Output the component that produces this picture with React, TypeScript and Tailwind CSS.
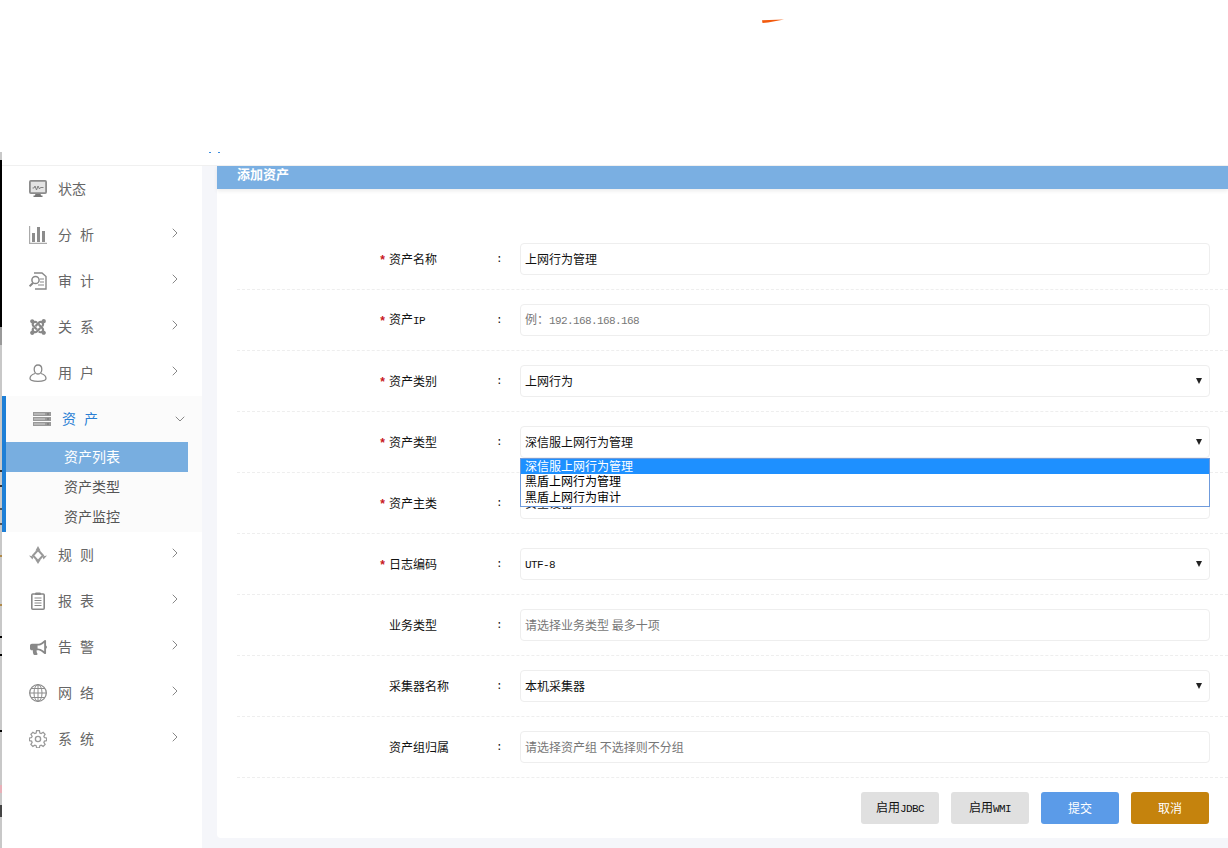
import { ChevronRight, ChevronDown } from "lucide-react";
import { FaBullhorn, FaJoomla } from "react-icons/fa";
import type { ReactNode } from "react";

const CJK = "font-['Noto_Sans_CJK_SC',sans-serif]";

function M({ children }: { children: ReactNode }) {
  return <span className="font-['Liberation_Mono',monospace] text-[11px] tracking-[-0.6px]">{children}</span>;
}

const MonitorIcon = () => (
  <svg width="18" height="18" viewBox="0 0 18 18" fill="none">
    <rect x="0.9" y="0.9" width="16.2" height="12.2" rx="1" fill="#e4e4e4" stroke="#8c8c8c" strokeWidth="1.8" />
    <path d="M3.500 8h1.500l1-2 1.500 4L9 6l1.500 3 1-1.500h3" stroke="#777" strokeWidth="0.9" />
    <path d="M6.500 14h5l.7 1.500H5.800zM4.500 15.500h9V17h-9z" fill="#777" />
  </svg>
);
const BarsIcon = () => (
  <svg width="18" height="18" viewBox="0 0 18 18" fill="#8c8c8c">
    <path d="M0 0h1.200v16.800H18V18H0z" fill="#aaa" />
    <rect x="3" y="7" width="3" height="9" />
    <rect x="8" y="1" width="3" height="15" />
    <rect x="13" y="5" width="3" height="11" />
  </svg>
);
const AuditIcon = () => (
  <svg width="18" height="18" viewBox="0 0 18 18" fill="none" stroke="#888">
    <path d="M5 1h8l4 3.500V17H6" strokeWidth="1.400" />
    <path d="M11 7h4M11 10h4M9 13h6" strokeWidth="1.200" />
    <circle cx="6.500" cy="8" r="3.600" strokeWidth="1.500" />
    <path d="M4 11 .6 14.400" strokeWidth="2" />
  </svg>
);
const UserIcon = () => (
  <svg width="18" height="18" viewBox="0 0 18 18" fill="none" stroke="#888" strokeWidth="1.300">
    <path d="M9 1c2.400 0 3.800 1.800 3.800 4.200S11.400 10 9 10 5.200 7.600 5.200 5.200 6.600 1 9 1Z" />
    <path d="M6 9.500C3 10.500 1 12 1 14.500c0 1.600 3 2.800 8 2.800s8-1.200 8-2.800c0-2.500-2-4-5-5" />
  </svg>
);
const ServerIcon = () => (
  <svg width="18" height="14" viewBox="0 0 18 14" fill="#999">
    <rect width="18" height="4" />
    <rect y="5" width="18" height="4" />
    <rect y="10" width="18" height="4" />
    <path d="M1 2h11M1 7h11M1 12h11" stroke="#eee" strokeWidth="0.700" />
    <path d="M14.500 1.500h1v1h-1zM14.500 6.500h1v1h-1zM14.500 11.500h1v1h-1z" fill="#444" />
  </svg>
);
const RuleIcon = () => (
  <svg width="18" height="18" viewBox="0 0 18 18" fill="none" stroke="#999">
    <path d="M9 4 14 9.500 9 15 4 9.500z" strokeWidth="2" />
    <path d="M9 0 6.500 4.500h5zM0 9.500l3.500 4 1-3zM18 9.500l-3.500 4-1-3zM6.500 14l2.500 4 2.500-4z" fill="#999" stroke="none" />
  </svg>
);
const ReportIcon = () => (
  <svg width="14" height="18" viewBox="0 0 14 18" fill="none" stroke="#888">
    <rect x="0.800" y="2" width="12.400" height="15.200" rx="1" strokeWidth="1.600" />
    <path d="M4.500 2.500V1h5v1.500z" fill="#888" />
    <path d="M3.500 6h7M3.500 8.500h7M3.500 11h7M3.500 13.500h7" strokeWidth="1" />
  </svg>
);
const GlobeIcon = () => (
  <svg width="18" height="18" viewBox="0 0 18 18" fill="none" stroke="#8c8c8c">
    <circle cx="9" cy="9" r="8.300" strokeWidth="1.300" />
    <ellipse cx="9" cy="9" rx="4" ry="8.300" />
    <path d="M9 .7v16.600M.7 9h16.600M2 4.500h14M2 13.500h14" />
  </svg>
);
const GearIcon = () => (
  <svg width="18" height="18" viewBox="0 0 24 24" fill="none" stroke="#999" strokeWidth="1.800">
    <circle cx="12" cy="12" r="3.500" />
    <path d="M10 1.500h4l.7 3.300 1.900.8 2.900-1.800 2.800 2.800-1.800 2.900.8 1.900 3.200.7v3.800l-3.200.7-.8 1.900 1.800 2.900-2.800 2.800-2.900-1.800-1.900.8-.7 3.200h-4l-.7-3.200-1.900-.8-2.900 1.800-2.800-2.800 1.800-2.900-.8-1.900-3.200-.7v-3.800l3.200-.7.8-1.900-1.800-2.900 2.800-2.800 2.900 1.800 1.900-.8z" transform="translate(12 12) scale(.92) translate(-12 -13.500)" />
  </svg>
);

const menuTop = [
  { label: "状态", icon: <MonitorIcon />, arrow: false },
  { label: "分析", icon: <BarsIcon />, arrow: true },
  { label: "审计", icon: <AuditIcon />, arrow: true },
  { label: "关系", icon: <FaJoomla size={18} color="#888" />, arrow: true },
  { label: "用户", icon: <UserIcon />, arrow: true },
];

const menuBottom = [
  { label: "规则", icon: <RuleIcon />, arrow: true },
  { label: "报表", icon: <ReportIcon />, arrow: true },
  { label: "告警", icon: <FaBullhorn size={17} color="#888" />, arrow: true },
  { label: "网络", icon: <GlobeIcon />, arrow: true },
  { label: "系统", icon: <GearIcon />, arrow: true },
];

function MenuItem({ label, icon, arrow }: { label: string; icon: ReactNode; arrow: boolean }) {
  return (
    <div className="flex items-center h-[46px] pl-[27px] text-[14px] text-[#666]">
      <span className="w-[18px] h-[18px] flex items-center justify-center">{icon}</span>
      <span className={`ml-[11px] w-[109px] -mt-[2px] ${arrow ? "tracking-[8px]" : ""}`}>{label}</span>
      {arrow && <ChevronRight size={16} color="#888" className="-mt-[5px]" strokeWidth={1.5} />}
    </div>
  );
}

function Sidebar() {
  return (
    <aside className="w-[200px] shrink-0 bg-white">
      {menuTop.map((m) => (
        <MenuItem key={m.label} {...m} />
      ))}
      <div className="bg-[#fbfbfb] border-l-4 border-[#1e7fd6]">
        <div className="flex items-center h-[46px] pl-[27px] text-[14px] text-[#2a7fd4]">
          <ServerIcon />
          <span className="ml-[11px] w-[110px] -mt-[2px] tracking-[8px]">资产</span>
          <ChevronDown size={16} color="#888" strokeWidth={1.5} />
        </div>
        <div className="w-[182px] text-[14px] text-[#555]">
          <div className="h-[30px] pl-[58px] leading-[28px] bg-[#78aee0] text-white">资产列表</div>
          <div className="h-[30px] pl-[58px] leading-[28px]">资产类型</div>
          <div className="h-[30px] pl-[58px] leading-[28px]">资产监控</div>
        </div>
      </div>
      {menuBottom.map((m) => (
        <MenuItem key={m.label} {...m} />
      ))}
    </aside>
  );
}

type Row = {
  label: ReactNode;
  value: ReactNode;
  required?: boolean;
  select?: boolean;
  placeholder?: boolean;
};

const rows: Row[] = [
  { label: "资产名称", value: "上网行为管理", required: true },
  { label: <>资产<M>IP</M></>, value: <>例：<M>192.168.168.168</M></>, required: true, placeholder: true },
  { label: "资产类别", value: "上网行为", required: true, select: true },
  { label: "资产类型", value: "深信服上网行为管理", required: true, select: true },
  { label: "资产主类", value: "安全设备", required: true, select: true },
  { label: "日志编码", value: <M>UTF-8</M>, required: true, select: true },
  { label: "业务类型", value: "请选择业务类型 最多十项", placeholder: true },
  { label: "采集器名称", value: "本机采集器", select: true },
  { label: "资产组归属", value: "请选择资产组 不选择则不分组", placeholder: true },
];

function FormRow({ row, dropdown }: { row: Row; dropdown?: boolean }) {
  return (
    <div className="flex items-center h-[61px] pb-px pl-[142px] border-b border-dashed border-[#eee] text-[12px] text-[#111]">
      <span className="w-[10px] h-[12px] font-['Liberation_Mono',monospace] text-[12px] font-bold leading-[17px] text-[#c8161d]">
        {row.required ? "*" : ""}
      </span>
      <span className="w-[107px]">{row.label}</span>
      <span className="w-[24px] -mt-px">
        <M>:</M>
      </span>
      <div
        className={`relative flex items-center justify-between w-[690px] h-[32px] pl-[4px] pr-[7px] border border-[#eee] rounded-[4px] ${
          row.placeholder ? "text-[#777]" : "text-[#111]"
        }`}
      >
        <span>{row.value}</span>
        {row.select && (
          <svg width="6" height="6" viewBox="0 0 6 6">
            <path d="M0 0h6L3 6z" fill="#222" />
          </svg>
        )}
        {dropdown && (
          <div className="absolute z-10 -left-px top-[31px] w-[690px] h-[49px] bg-white border border-[#6f9bdc] leading-[14px] text-black">
            <div className="h-[15px] pl-[4px] bg-[#1e90ff] text-white">深信服上网行为管理</div>
            <div className="h-[16px] pl-[4px]">黑盾上网行为管理</div>
            <div className="h-[16px] pl-[4px]">黑盾上网行为审计</div>
          </div>
        )}
      </div>
    </div>
  );
}

function Btn({ className, children }: { className: string; children: ReactNode }) {
  return (
    <button className={`w-[78px] h-[32px] rounded-[3px] text-[12px] ${className}`}>{children}</button>
  );
}

export default function App() {
  return (
    <div className={`relative h-[848px] w-[1228px] overflow-hidden bg-white ${CJK}`}>
      {/* leftover edge of the window behind */}
      <div className="absolute z-10 left-0 top-[152px] w-[2px] h-[696px] bg-[#c8c8c8]">
        <div className="mt-[8px] h-[167px] bg-black" />
        <div className="h-[18px] bg-[#999]" />
        <div className="mt-[125px] h-[2px] bg-[#333]" />
        <div className="mt-[13px] h-[2px] bg-[#333]" />
        <div className="mt-[21px] h-[2px] bg-[#555]" />
        <div className="mt-[13px] h-[2px] bg-[#555]" />
        <div className="mt-[30px] h-[2px] bg-[#b08a4a]" />
        <div className="mt-[47px] h-[2px] bg-[#b08a4a]" />
        <div className="mt-[30px] h-[2px] bg-black" />
        <div className="mt-[16px] h-[2px] bg-black" />
        <div className="mt-[74px] h-[2px] bg-black" />
        <div className="mt-[53px] h-[8px] bg-[#e8b0b8]" />
        <div className="mt-[12px] h-[12px] bg-[#444]" />
      </div>

      <header className="relative h-[166px] bg-white border-b border-[#f0f0f0]">
        <svg className="absolute left-[761px] top-[19px]" width="24" height="5" viewBox="0 0 24 5">
          <path d="M1 1.200 23 0.500 7 3.500 1.500 4z" fill="#f25a0e" />
        </svg>
        <span className="absolute left-[209px] top-[152px] w-[2px] h-px bg-[#3b8de0]" />
        <span className="absolute left-[218px] top-[152px] w-[2px] h-px bg-[#3b8de0]" />
      </header>

      <div className="flex h-[682px] pl-[2px]">
        <Sidebar />
        <main className="flex-1 bg-[#f5f6fa] pl-[15px] pb-[10px]">
          <div className="h-full bg-white rounded-bl-[4px]">
            <div className="h-[23px] pl-[20px] bg-[#7aafe2] text-[13px] font-bold leading-[16px] text-white shadow-[0_2px_4px_rgba(0,0,0,0.08)]">
              添加资产
            </div>
            <div className="pl-[20px] pt-[40px]">
              {rows.map((row, i) => (
                <FormRow key={i} row={row} dropdown={i === 3} />
              ))}
              <div className="flex justify-end gap-[12px] pt-[14px] pr-[19px]">
                <Btn className="bg-[#e0e0e0] text-[#111]">启用<M>JDBC</M></Btn>
                <Btn className="bg-[#e0e0e0] text-[#111]">启用<M>WMI</M></Btn>
                <Btn className="bg-[#5b9be8] text-white">提交</Btn>
                <Btn className="bg-[#c5830d] text-white">取消</Btn>
              </div>
            </div>
          </div>
        </main>
      </div>
    </div>
  );
}
